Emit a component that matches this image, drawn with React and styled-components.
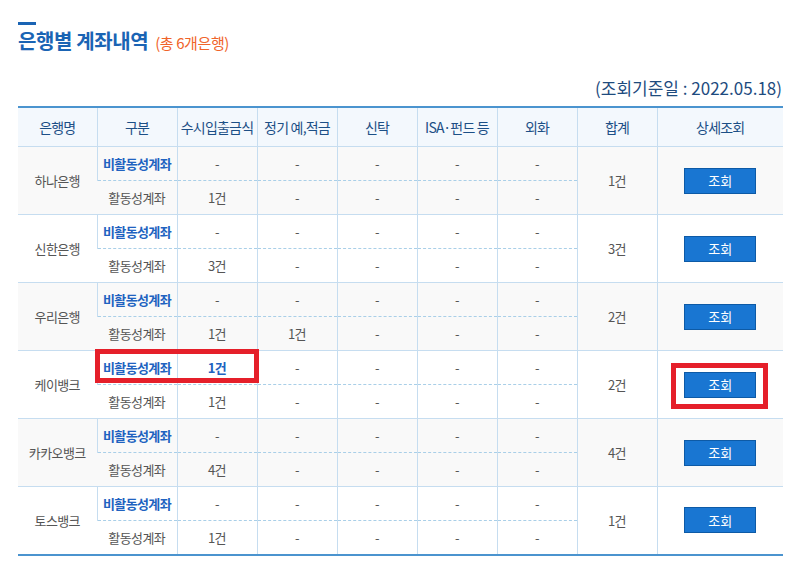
import React from "react";
import styled, { createGlobalStyle } from "styled-components";

const Global = createGlobalStyle`
  html, body { margin: 0; padding: 0; background: #fff; }
  body { font-family: "Noto Sans CJK KR", "Noto Sans", sans-serif; }
`;

const Page = styled.div`
  width: 801px;
  padding: 22px 18px 0;
  box-sizing: border-box;
`;

const TitleBar = styled.div`
  width: 18px;
  height: 3px;
  background: #1a64b4;
`;

const Title = styled.h2`
  margin: 3px 0 0;
  font-size: 20px;
  line-height: 26px;
  font-weight: 700;
  color: #1a64b4;
  letter-spacing: -0.4px;
  display: flex;
  align-items: baseline;
  gap: 7px;
`;

const Sub = styled.span`
  font-size: 15px;
  font-weight: 400;
  color: #f0642a;
  letter-spacing: -0.4px;
`;

const DateLine = styled.div`
  margin-top: 22px;
  margin-bottom: 8px;
  text-align: right;
  font-size: 17px;
  line-height: 20px;
  color: #1e4b7e;
  padding-right: 1px;
`;

const TableWrap = styled.div`
  position: relative;
  width: 765px;
`;

const Table = styled.table`
  width: 765px;
  border-collapse: collapse;
  table-layout: fixed;
  border-top: 2px solid #4b94cf;
  border-bottom: 2px solid #4b94cf;
  font-size: 13px;
  letter-spacing: -0.6px;
`;

const Th = styled.th`
  height: 38px;
  padding: 0;
  background: #f3f8fd;
  color: #1c4f86;
  font-weight: 400;
  font-size: 14px;
  letter-spacing: -0.8px;
  white-space: nowrap;
  border-left: 1px solid #c6ddf0;
  border-bottom: 1px solid #c6ddf0;
  &:first-child { border-left: none; }
`;

const Tr = styled.tr`
  height: 34px;
  background: ${p => (p.$alt ? "#f9f9f9" : "#fff")};
`;

const Td = styled.td`
  padding: 0;
  text-align: center;
  color: ${p => (p.$blue ? "#2062c0" : "#555")};
  font-weight: ${p => (p.$blue ? 700 : 400)};
  border-left: 1px solid #c6ddf0;
  border-bottom: ${p =>
    p.$dash ? "1px dashed #a9cfe8" : "1px solid #c6ddf0"};
  white-space: nowrap;
  &:first-child { border-left: none; }
`;

const BankTd = styled(Td)`
  border-left: none;
`;

const Btn = styled.button`
  width: 72px;
  height: 26px;
  background: #1976d2;
  border: 1px solid #0d5aa6;
  color: #fff;
  font-family: "Noto Sans CJK KR", sans-serif;
  font-size: 13px;
  padding: 0;
  cursor: pointer;
  vertical-align: middle;
`;

const Highlight = styled.div`
  position: absolute;
  border: 5px solid #e51f2a;
  box-sizing: border-box;
  pointer-events: none;
`;

const banks = [
  { name: "하나은행", inactive: ["-", "-", "-", "-", "-"], active: ["1건", "-", "-", "-", "-"], total: "1건" },
  { name: "신한은행", inactive: ["-", "-", "-", "-", "-"], active: ["3건", "-", "-", "-", "-"], total: "3건" },
  { name: "우리은행", inactive: ["-", "-", "-", "-", "-"], active: ["1건", "1건", "-", "-", "-"], total: "2건" },
  { name: "케이뱅크", inactive: ["1건", "-", "-", "-", "-"], active: ["1건", "-", "-", "-", "-"], total: "2건" },
  { name: "카카오뱅크", inactive: ["-", "-", "-", "-", "-"], active: ["4건", "-", "-", "-", "-"], total: "4건" },
  { name: "토스뱅크", inactive: ["-", "-", "-", "-", "-"], active: ["1건", "-", "-", "-", "-"], total: "1건" },
];

const cols = [79, 80, 80, 80, 80, 80, 80, 80, 126];
const heads = ["은행명", "구분", "수시입출금식", "정기 예,적금", "신탁", "ISA·펀드 등", "외화", "합계", "상세조회"];

export default function App() {
  return (
    <Page>
      <Global />
      <TitleBar />
      <Title>
        은행별 계좌내역 <Sub>(총 6개은행)</Sub>
      </Title>
      <DateLine>(조회기준일 : 2022.05.18)</DateLine>
      <TableWrap>
        <Table>
          <colgroup>
            {cols.map((w, i) => (
              <col key={i} style={{ width: w }} />
            ))}
          </colgroup>
          <thead>
            <tr>
              {heads.map(h => (
                <Th key={h}>{h}</Th>
              ))}
            </tr>
          </thead>
          <tbody>
            {banks.map((b, bi) => {
              const alt = bi % 2 === 0;
              return (
                <React.Fragment key={b.name}>
                  <Tr $alt={alt}>
                    <BankTd rowSpan={2}>{b.name}</BankTd>
                    <Td $blue $dash>비활동성계좌</Td>
                    {b.inactive.map((v, i) => (
                      <Td key={i} $dash $blue={v !== "-"}>{v}</Td>
                    ))}
                    <Td rowSpan={2}>{b.total}</Td>
                    <Td rowSpan={2}>
                      <Btn>조회</Btn>
                    </Td>
                  </Tr>
                  <Tr $alt={alt}>
                    <Td>활동성계좌</Td>
                    {b.active.map((v, i) => (
                      <Td key={i}>{v}</Td>
                    ))}
                  </Tr>
                </React.Fragment>
              );
            })}
          </tbody>
        </Table>
        <Highlight style={{ left: 77, top: 243, width: 164, height: 34 }} />
        <Highlight style={{ left: 653, top: 257, width: 97, height: 46 }} />
      </TableWrap>
    </Page>
  );
}
